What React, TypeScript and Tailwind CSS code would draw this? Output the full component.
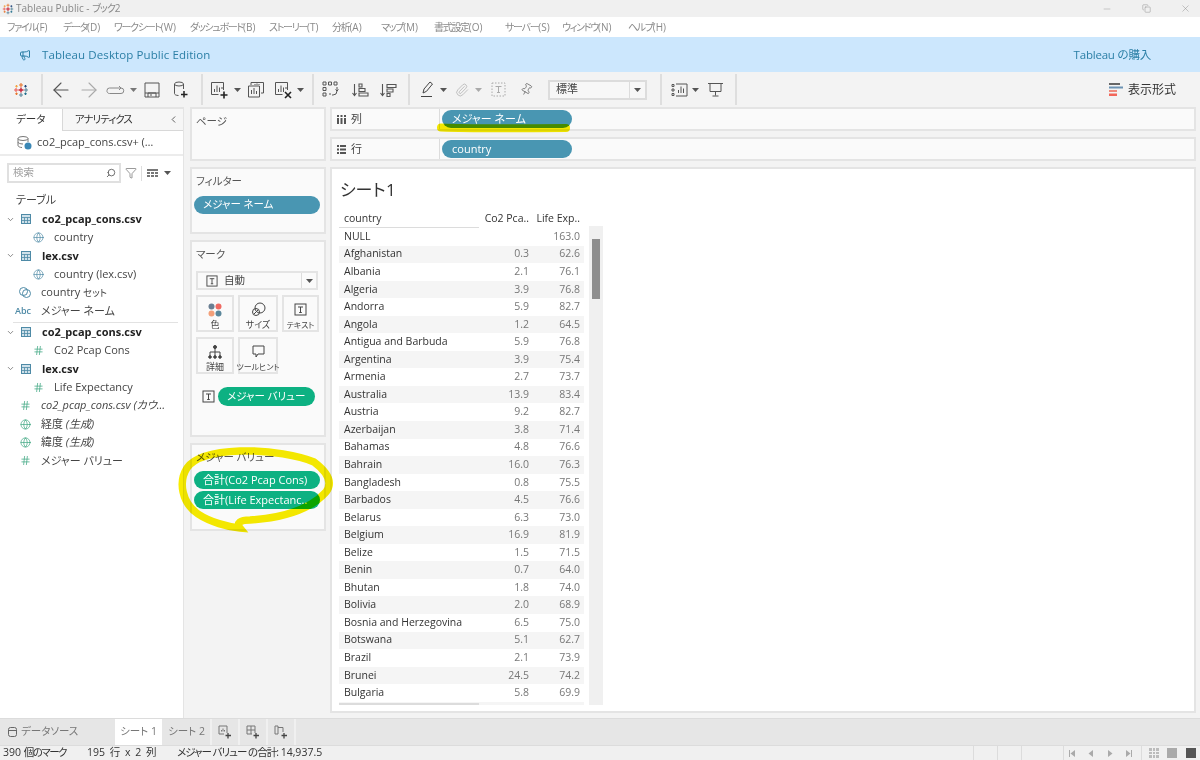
import React from "react";
import { ArrowLeft, ArrowRight, ChevronDown, ChevronLeft, Search, Filter, Minus, X, Pin, Paperclip, Megaphone, Copy, Globe, Hash } from "lucide-react";

const Caret = ({ c = "#555" }: { c?: string }) => (
  <svg width="7" height="4" viewBox="0 0 7 4" className="shrink-0"><path d="M0 0h7L3.5 4z" fill={c} /></svg>
);

const TLogo = ({ s = 16 }: { s?: number }) => (
  <svg width={s} height={s} viewBox="0 0 16 16" strokeWidth="1.1" fill="none">
    <path d="M8 1v4M6 3h4" stroke="#e8762d" />
    <path d="M8 11v4M6 13h4" stroke="#5b879b" />
    <path d="M1 8h4M3 6v4" stroke="#eb5c55" />
    <path d="M11 8h4M13 6v4" stroke="#59879b" />
    <path d="M8 5.5v5M5.5 8h5" stroke="#c72035" strokeWidth="1.4" />
    <path d="M3.5 3v2.6M2.2 4.3h2.6" stroke="#f3a33f" />
    <path d="M12.5 3v2.6M11.2 4.3h2.6" stroke="#1f447a" />
    <path d="M3.5 10.4V13M2.2 11.7h2.6" stroke="#e8762d" />
    <path d="M12.5 10.4V13M11.2 11.7h2.6" stroke="#1f6e8c" />
  </svg>
);

const Chart = ({ badge }: { badge?: "plus" | "x" }) => (
  <svg width="18" height="18" viewBox="0 0 18 18" fill="none" stroke="#555" strokeWidth="1">
    <path d="M13.5 9V1.5h-12v12h7" />
    <path d="M4.5 11V8M7 11V4.5M9.5 11V6.5M12 8V6" />
    {badge === "plus" && <path d="M14 10.5v7M10.5 14h7" stroke="#222" strokeWidth="1.6" />}
    {badge === "x" && <path d="M11 11l6 6M17 11l-6 6" stroke="#222" strokeWidth="1.6" />}
  </svg>
);

const Bars = ({ flip }: { flip?: boolean }) => (
  <svg width="17" height="16" viewBox="0 0 17 16" fill="none" stroke="#555" strokeWidth="1.1">
    <path d="M2.5 2v11M.5 11l2 2.5 2-2.5" />
    {flip ? <path d="M7 2.5h9v3H7zM7 7h6v3H7zM7 11.5h3v3H7z" /> : <path d="M7 2h3v3H7zM7 6.5h6v3H7zM7 11h9v3H7z" />}
  </svg>
);

const Shelf = ({ label, icon, pill }: { label: string; icon: React.ReactNode; pill: string }) => (
  <div className="h-[24px] flex items-center border-2 border-[#e4e4e4] bg-[#fafafa]">
    <div className="w-[108px] h-full flex items-center gap-[5px] pl-[5px] border-r border-[#dcdcdc] text-[11px] text-[#444]">
      {icon}
      <span>{label}</span>
    </div>
    <div className="ml-[2px] w-[130px] h-[18px] rounded-full bg-[#4996b2] text-white text-[11px] leading-[18px] pl-[10px]">{pill}</div>
  </div>
);

const Card = ({ title, className, children }: { title: string; className: string; children?: React.ReactNode }) => (
  <div className={"border-2 border-[#e4e4e4] bg-[#fafafa] " + className}>
    <div className="text-[10.5px] text-[#555] pl-[4px] pt-[4px] leading-[16px]">{title}</div>
    {children}
  </div>
);

const TableIcon = () => (
  <svg width="10" height="10" viewBox="0 0 10 10" className="shrink-0">
    <rect x="0.5" y="0.5" width="9" height="9" fill="#cfe1ea" stroke="#4e8aa6" />
    <path d="M0 3.5h10M3.5 3.5V10M6.5 3.5V10M0 6.5h10" stroke="#4e8aa6" strokeWidth="0.8" />
  </svg>
);

const Parent = ({ text }: { text: string }) => (
  <div className="h-[18.4px] flex items-center text-[11px] font-bold text-[#222]">
    <ChevronDown size={9} className="ml-[6px] text-[#666] shrink-0" />
    <span className="ml-[6px]"><TableIcon /></span>
    <span className="ml-[11px]">{text}</span>
  </div>
);

const GlobeI = ({ c = "#4e8aa6" }: { c?: string }) => <Globe size={11} color={c} strokeWidth={1.5} className="shrink-0" />;
const HashI = () => <Hash size={11} color="#3ba57f" strokeWidth={1.6} className="shrink-0" />;

const Child = ({ icon, text }: { icon: React.ReactNode; text: string }) => (
  <div className="h-[18.4px] flex items-center text-[11px] text-[#444] pl-[33px] gap-[10px] whitespace-nowrap">
    {icon}
    <span>{text}</span>
  </div>
);

const Top = ({ icon, text, italic }: { icon: React.ReactNode; text: React.ReactNode; italic?: boolean }) => (
  <div className="h-[18.4px] flex items-center text-[11px] text-[#444] whitespace-nowrap">
    <span className="w-[41px] flex justify-center pl-[9px] shrink-0">{icon}</span>
    <span className={italic ? "italic" : ""}>{text}</span>
  </div>
);

const MarkBtn = ({ icon, label, w = "w-[38px]", small }: { icon: React.ReactNode; label: string; w?: string; small?: boolean }) => (
  <div className={"h-[37px] border-2 border-[#e4e4e4] bg-[#fafafa] flex flex-col items-center pt-[3px] " + w}>
    <div className="h-[19px] flex items-center">{icon}</div>
    <div className={(small ? "text-[8px]" : "text-[9px]") + " text-[#444] leading-[11px] whitespace-nowrap"}>{label}</div>
  </div>
);

const TBox = ({ s = 13 }: { s?: number }) => (
  <svg width={s} height={s} viewBox="0 0 13 13" fill="none" stroke="#444" className="shrink-0">
    <rect x="1" y="1" width="11" height="11" />
    <path d="M4 4h5M6.5 4v5.5M5.2 9.5h2.6" />
  </svg>
);

const rows: [string, string, string][] = [
  ["NULL", "", "163.0"], ["Afghanistan", "0.3", "62.6"], ["Albania", "2.1", "76.1"], ["Algeria", "3.9", "76.8"],
  ["Andorra", "5.9", "82.7"], ["Angola", "1.2", "64.5"], ["Antigua and Barbuda", "5.9", "76.8"], ["Argentina", "3.9", "75.4"],
  ["Armenia", "2.7", "73.7"], ["Australia", "13.9", "83.4"], ["Austria", "9.2", "82.7"], ["Azerbaijan", "3.8", "71.4"],
  ["Bahamas", "4.8", "76.6"], ["Bahrain", "16.0", "76.3"], ["Bangladesh", "0.8", "75.5"], ["Barbados", "4.5", "76.6"],
  ["Belarus", "6.3", "73.0"], ["Belgium", "16.9", "81.9"], ["Belize", "1.5", "71.5"], ["Benin", "0.7", "64.0"],
  ["Bhutan", "1.8", "74.0"], ["Bolivia", "2.0", "68.9"], ["Bosnia and Herzegovina", "6.5", "75.0"], ["Botswana", "5.1", "62.7"],
  ["Brazil", "2.1", "73.9"], ["Brunei", "24.5", "74.2"], ["Bulgaria", "5.8", "69.9"], ["Burkina Faso", "0.2", "61.1"],
];

const menus = [
  ["ファイル", "(F)", 7], ["データ", "(D)", 63], ["ワークシート", "(W)", 114], ["ダッシュボード", "(B)", 190], ["ストーリー", "(T)", 269], ["分析", "(A)", 332],
  ["マップ", "(M)", 381], ["書式設定", "(O)", 434], ["サーバー", "(S)", 505], ["ウィンドウ", "(N)", 562], ["ヘルプ", "(H)", 628],
] as [string, string, number][];

const Sep = ({ ml }: { ml: number }) => <div className="w-[2px] h-[31px] bg-[#dedede] shrink-0" style={{ marginLeft: ml }} />;

export default function App() {
  return (
    <div className="w-[1200px] h-[760px] relative overflow-hidden flex flex-col bg-[#f3f3f3] [font-family:'Open_Sans','Noto_Sans_CJK_JP',sans-serif] [font-feature-settings:'palt']">
      {/* title bar */}
      <div className="h-[17px] bg-[#f0f0f0] flex items-center pl-[2px] text-[10px] text-[#888] gap-[2px] shrink-0">
        <TLogo s={12} />
        <span>Tableau Public - <span className="tracking-[-1px]">ブック2</span></span>
        <div className="ml-auto flex items-center text-[#888]">
          <Minus size={10} strokeWidth={1} />
          <Copy size={9} strokeWidth={1.2} className="ml-[30px]" />
          <X size={11} strokeWidth={1} className="ml-[29px] mr-[9px]" />
        </div>
      </div>
      {/* menu */}
      <div className="h-[20px] bg-white flex items-center text-[10px] text-[#8a8a8a] shrink-0">
        {menus.map(([m, k, x], i) => {
          const next = i + 1 < menus.length ? menus[i + 1][2] : x + 60;
          return (
            <span key={m} style={{ width: next - x, marginLeft: i === 0 ? x : 0 }} className="whitespace-nowrap">
              <span className="tracking-[-1.3px]">{m}</span>
              <span>{k}</span>
            </span>
          );
        })}
      </div>
      {/* banner */}
      <div className="h-[35px] bg-[#cce7fd] flex items-center text-[11.5px] text-[#2b7fa6] shrink-0 tracking-[0.1px]">
        <Megaphone size={12} className="ml-[19px] mr-[11px]" strokeWidth={2} />
        <span>Tableau Desktop Public Edition</span>
        <span className="ml-auto mr-[49px] tracking-[-0.2px]">Tableau の購入</span>
      </div>
      {/* toolbar */}
      <div className="h-[35px] flex items-center shrink-0 text-[#555]">
        <div className="ml-[13px]"><TLogo /></div>
        <Sep ml={12} />
        <ArrowLeft size={24} strokeWidth={1.1} className="ml-[6px]" />
        <ArrowRight size={24} strokeWidth={1.1} className="ml-[4px] text-[#aaa]" />
        <svg width="19" height="10" viewBox="0 0 19 10" fill="none" stroke="#888" className="ml-[5px]"><path d="M1 5.5a2.5 2.5 0 0 1 2.5-2.5h11.5a2.5 2.5 0 0 1 0 5.5H3.5A2.5 2.5 0 0 1 1 5.5zM13 1l2 2-2 2" /></svg>
        <span className="ml-[5px]"><Caret c="#777" /></span>
        <svg width="16" height="16" viewBox="0 0 16 16" fill="none" stroke="#555" className="ml-[7px]"><path d="M1 1h14v14H1zM4 15v-4h8v4M1 11h14M6 13h2" /></svg>
        <svg width="15" height="17" viewBox="0 0 15 17" fill="none" stroke="#555" className="ml-[13px]"><ellipse cx="6" cy="3" rx="4.5" ry="2" /><path d="M1.5 3v9.5c0 1 1.5 2 4 2M10.500 3v5" /><path d="M11 10v6.500M8 13.500h6.500" stroke="#222" strokeWidth="1.5" /></svg>
        <Sep ml={13} />
        <span className="ml-[7px] flex"><Chart badge="plus" /></span>
        <span className="ml-[6px]"><Caret /></span>
        <span className="ml-[6px] flex"><svg width="18" height="18" viewBox="0 0 18 18" fill="none" stroke="#555"><path d="M4 4V1.500h12.500V12H14M1.500 5h11v11h-11zM4.500 13V9M7 13V7M9.500 13v-3M8 4V3M10 4V2.500M12 4V3" /></svg></span>
        <span className="ml-[9px] flex"><Chart badge="x" /></span>
        <span className="ml-[5px]"><Caret /></span>
        <Sep ml={8} />
        <svg width="17" height="17" viewBox="0 0 17 17" fill="none" stroke="#555" className="ml-[8px]"><path d="M1 1h3v3H1zM6.500 1h3v3h-3zM12 1h3v3h-3zM1 6.500h3v3H1zM1 12h3v3H1zM7 13h2M15 6v4a4 4 0 0 1-4 4h-1M13.500 8.500l1.500 1.500 1.500-1.500" /></svg>
        <span className="ml-[13px] flex"><Bars /></span>
        <span className="ml-[11px] flex"><Bars flip /></span>
        <Sep ml={11} />
        <svg width="13" height="17" viewBox="0 0 13 17" fill="none" stroke="#444" className="ml-[11px]"><path d="M2 12l1-4 6-7 2.500 2-6 7.300zM0 15.500h11" /></svg>
        <span className="ml-[6px]"><Caret /></span>
        <Paperclip size={14} strokeWidth={1.2} className="ml-[8px] text-[#aaa]" />
        <span className="ml-[6px]"><Caret c="#aaa" /></span>
        <div className="ml-[9px]"><svg width="15" height="15" viewBox="0 0 15 15" fill="none" stroke="#aaa"><rect x="1" y="1" width="13" height="13" strokeDasharray="1.500 1.500" /><path d="M4.500 4.500h6M7.500 4.500v6M6 10.500h3" /></svg></div>
        <Pin size={13} strokeWidth={1.2} className="ml-[14px] rotate-[30deg]" />
        <div className="ml-[15px] w-[99px] h-[20px] border-2 border-[#dcdcdc] bg-[#f7f7f7] flex items-center text-[11px] text-[#444] pl-[6px]">
          <span>標準</span>
          <div className="ml-auto w-[16px] h-full border-l border-[#dcdcdc] flex items-center justify-center"><Caret /></div>
        </div>
        <Sep ml={13} />
        <svg width="17" height="14" viewBox="0 0 17 14" fill="none" stroke="#555" className="ml-[9px]"><path d="M5 1h11v12H5M7.500 10V7M10 10V3.500M12.500 10V5.500M1 1.500h2v2H1zM1 6h2v2H1zM1 10.500h2v2H1z" /></svg>
        <span className="ml-[4px]"><Caret /></span>
        <svg width="15" height="15" viewBox="0 0 15 15" fill="none" stroke="#555" className="ml-[9px]"><path d="M0 1.500h15M2 1.500v8h11v-8M7.500 9.500v4M4.500 14h6" /></svg>
        <Sep ml={12} />
        <div className="ml-auto mr-[24px] flex items-center gap-[5px] text-[12px] text-[#333]">
          <svg width="14" height="14" viewBox="0 0 14 14"><rect width="11" height="2" fill="#666" /><rect y="3.500" width="14" height="2" fill="#6c93b4" /><rect y="7" width="8" height="2" fill="#ef8a7c" /><rect y="10.500" width="8" height="2.500" fill="#f2665a" /></svg>
          <span>表示形式</span>
        </div>
      </div>

      {/* main */}
      <div className="h-[611px] flex shrink-0">
        {/* data pane */}
        <div className="w-[184px] shrink-0 bg-white border-r border-[#e4e4e4] overflow-hidden">
          <div className="h-[24px] flex text-[10.5px] text-[#333] border-t-2 border-[#e4e4e4]">
            <div className="w-[63px] border-r border-[#d8d8d8] pl-[16px] leading-[20px]">データ</div>
            <div className="flex-1 bg-[#f6f6f6] border-b border-[#d8d8d8] pl-[12px] flex items-center">
              <span className="tracking-[-1px]">アナリティクス</span>
              <ChevronLeft size={11} className="ml-auto mr-[4px] text-[#555]" />
            </div>
          </div>
          <div className="h-[25px] flex items-center border-b-2 border-[#ececec] text-[11px] text-[#444] pl-[17px] gap-[5px] whitespace-nowrap">
            <svg width="15" height="15" viewBox="0 0 15 15" fill="none" stroke="#777"><ellipse cx="6" cy="3.500" rx="5" ry="2" /><path d="M1 3.500v7c0 1 2 2 4 2M11 3.500V7M1 7c0 1 2 2 5 2" /><circle cx="11" cy="11" r="3.500" fill="#3a87b5" stroke="none" /></svg>
            <span>co2_pcap_cons.csv+ (…</span>
          </div>
          <div className="mt-[6px] flex items-center h-[22px] pl-[7px]">
            <div className="w-[114px] h-[20px] border-2 border-[#e0e0e0] flex items-center pl-[4px] text-[10.5px] text-[#a0a0a0]">
              <span>検索</span>
              <Search size={10} className="ml-auto mr-[3px] text-[#555] -scale-x-100" />
            </div>
            <Filter size={12} strokeWidth={1.2} className="ml-[4px] text-[#555]" />
            <div className="w-px h-[15px] bg-[#ddd] ml-[4px]" />
            <svg width="11" height="9" viewBox="0 0 11 9" className="ml-[5px]" fill="#777"><path d="M0 0h11v2H0zM0 3h3v2H0zM4 3h3v2H4zM8 3h3v2H8zM0 6h3v2H0zM4 6h3v2H4zM8 6h3v2H8z" /></svg>
            <span className="ml-[6px]"><Caret /></span>
          </div>
          <div className="mt-[7px] h-[18.4px] flex items-center pl-[16px] text-[11px] text-[#444]">テーブル</div>
          <div className="h-[0.6px]" />
          <Parent text="co2_pcap_cons.csv" />
          <Child icon={<GlobeI />} text="country" />
          <Parent text="lex.csv" />
          <Child icon={<GlobeI />} text="country (lex.csv)" />
          <Top icon={<svg width="12" height="11" viewBox="0 0 12 11" fill="none" stroke="#4e8aa6"><circle cx="4.500" cy="4.500" r="4" /><circle cx="7.500" cy="6.500" r="4" /></svg>} text={<>country <span className="text-[9.5px]">セット</span></>} />
          <Top icon={<span className="text-[9px] font-semibold text-[#4e8aa6] -ml-[4px]">Abc</span>} text="メジャー ネーム" />
          <div className="ml-[13px] h-[2.600px] border-b border-[#e2e2e2] w-[165px]" />
          <Parent text="co2_pcap_cons.csv" />
          <Child icon={<HashI />} text="Co2 Pcap Cons" />
          <Parent text="lex.csv" />
          <Child icon={<HashI />} text="Life Expectancy" />
          <Top icon={<HashI />} italic text="co2_pcap_cons.csv (カウ…" />
          <Top icon={<GlobeI c="#3ba57f" />} text={<>経度 <i>(生成)</i></>} />
          <Top icon={<GlobeI c="#3ba57f" />} text={<>緯度 <i>(生成)</i></>} />
          <Top icon={<HashI />} text="メジャー バリュー" />
        </div>

        {/* shelves column */}
        <div className="w-[136px] ml-[6px] shrink-0 flex flex-col gap-[6px] mr-[4px]">
          <Card title="ページ" className="h-[54px]" />
          <Card title="フィルター" className="h-[67px]">
            <div className="mt-[7px] mx-[2px] w-[126px] h-[18px] rounded-full bg-[#4996b2] text-white text-[10.5px] leading-[17px] pl-[9px]">メジャー ネーム</div>
          </Card>
          <Card title="マーク" className="h-[197px]">
            <div className="mt-[9px] mx-[4px] h-[19px] w-[122px] border-2 border-[#e4e4e4] flex items-center text-[10.5px] text-[#444] pl-[8px] gap-[6px]">
              <TBox s={12} />
              <span>自動</span>
              <div className="ml-auto w-[15px] h-full border-l border-[#dcdcdc] flex items-center justify-center"><Caret /></div>
            </div>
            <div className="mt-[5px] ml-[4px] flex gap-[4px]">
              <MarkBtn label="色" icon={<svg width="14" height="14" viewBox="0 0 14 14"><circle cx="3.500" cy="3.500" r="3" fill="#6a7f93" /><circle cx="10.500" cy="3.500" r="3" fill="#ef6a62" /><circle cx="3.500" cy="10.500" r="3" fill="#f3a07a" /><circle cx="10.500" cy="10.500" r="3" fill="#5b879b" /></svg>} />
              <MarkBtn label="サイズ" w="w-[40px]" icon={<svg width="15" height="15" viewBox="0 0 15 15" fill="none" stroke="#444"><circle cx="9" cy="6" r="5" /><circle cx="5" cy="10" r="3.500" /><path d="M3 12l4-4" /></svg>} />
              <MarkBtn label="テキスト" w="w-[37px]" small icon={<TBox />} />
            </div>
            <div className="mt-[5px] ml-[4px] flex gap-[4px]">
              <MarkBtn label="詳細" icon={<svg width="14" height="14" viewBox="0 0 14 14" fill="none" stroke="#444"><path d="M7 3v4M2 12V7h10v5M7 7v5" /><circle cx="7" cy="2" r="1.500" fill="#444" /><circle cx="2" cy="12" r="1.300" fill="#444" /><circle cx="7" cy="12" r="1.300" fill="#444" /><circle cx="12" cy="12" r="1.300" fill="#444" /></svg>} />
              <MarkBtn label="ツールヒント" w="w-[40px]" small icon={<svg width="13" height="13" viewBox="0 0 13 13" fill="none" stroke="#444"><path d="M1 1h11v8H6l-2 3V9H1z" /></svg>} />
            </div>
            <div className="mt-[13px] ml-[10px] flex items-center gap-[3px]">
              <TBox s={13} />
              <div className="w-[97px] h-[19px] rounded-full bg-[#0db182] text-white text-[10.5px] leading-[18px] pl-[9px] whitespace-nowrap">メジャー バリュー</div>
            </div>
          </Card>
          <Card title="メジャー バリュー" className="h-[88px]">
            <div className="mt-[6px] mx-[2px] flex flex-col gap-[2px] text-white text-[11px] leading-[18px]">
              <div className="w-[126px] h-[18px] rounded-full bg-[#0db182] pl-[9px] whitespace-nowrap">合計(Co2 Pcap Cons)</div>
              <div className="w-[126px] h-[18px] rounded-full bg-[#0db182] pl-[9px] whitespace-nowrap">合計(Life Expectanc..</div>
            </div>
          </Card>
        </div>

        {/* right */}
        <div className="w-[866px] shrink-0 flex flex-col gap-[6px]">
          <Shelf label="列" pill="メジャー ネーム" icon={<svg width="9" height="9" viewBox="0 0 9 9" fill="#555"><path d="M0 0h2v2H0zM3.500 0h2v2h-2zM7 0h2v2H7zM0 3h2v6H0zM3.500 3h2v6h-2zM7 3h2v6H7z" /></svg>} />
          <Shelf label="行" pill="country" icon={<svg width="9" height="9" viewBox="0 0 9 9" fill="#555"><path d="M0 0h2v2H0zM0 3.500h2v2H0zM0 7h2v2H0zM3 0h6v2H3zM3 3.500h6v2H3zM3 7h6v2H3z" /></svg>} />
          <div className="h-[546px] border-2 border-[#e4e4e4] bg-white pl-[7px] overflow-hidden">
            <div className="h-[41px] text-[17px] text-[#333] pt-[9px] pl-[1px] leading-[24px] [word-spacing:-4px]">シート 1</div>
            <div className="flex h-[495px] overflow-hidden">
              <div className="w-[245px] shrink-0 relative overflow-hidden">
                <div className="h-[18px] flex text-[10.5px] text-[#333] leading-[17px]">
                  <div className="w-[140px] pl-[5px] border-b border-[#dcdcdc]">country</div>
                  <div className="w-[50px] text-right whitespace-nowrap">Co2 Pca..</div>
                  <div className="w-[51px] text-right whitespace-nowrap">Life Exp..</div>
                </div>
                {rows.map((r, i) => (
                  <div key={r[0]} className={"h-[17.56px] flex items-center text-[10.5px] " + (i % 2 ? "bg-[#f5f5f5]" : "")}>
                    <div className="w-[140px] pl-[5px] text-[#333] whitespace-nowrap">{r[0]}</div>
                    <div className="w-[50px] text-right text-[#777]">{r[1]}</div>
                    <div className="w-[51px] text-right text-[#777]">{r[2]}</div>
                  </div>
                ))}
                <div className="absolute left-0 top-[493px] w-[140px] h-[2px] bg-[#dcdcdc]" />
              </div>
              <div className="ml-[5px] mt-[16px] w-[14px] h-[479px] bg-[#f0f0f0] flex justify-center">
                <div className="mt-[13px] w-[8px] h-[60px] bg-[#8e8e8e]" />
              </div>
            </div>
          </div>
        </div>
      </div>

      {/* tabs */}
      <div className="h-[27px] bg-[#e6e6e6] border-t border-[#dcdcdc] flex text-[10.5px] text-[#777] shrink-0">
        <div className="w-[115px] flex items-center pl-[8px] gap-[4px]">
          <svg width="9" height="10" viewBox="0 0 9 10" fill="none" stroke="#666"><rect x="0.500" y="0.500" width="8" height="9" rx="2" /><path d="M0.500 3.500h8" /></svg>
          <span>データソース</span>
        </div>
        <div className="w-[47px] bg-white flex items-center justify-center">シート 1</div>
        <div className="w-[47px] ml-px bg-[#e6e6e6] flex items-center justify-center">シート 2</div>
        {[0, 1, 2].map((k) => (
          <div key={k} className="w-[28px] border-l-2 border-[#f0f0f0] flex items-center justify-center">
            <svg width="14" height="14" viewBox="0 0 14 14" fill="none" stroke="#777">
              {k === 0 && <path d="M9 8V1H1v8h5M3.500 6.500V5M5 6.500V3.500M6.500 6.500V5" />}
              {k === 1 && <path d="M9 8V1H1v8h5M1 5h8M5 1v8" />}
              {k === 2 && <path d="M4 1H1v8h3V1zM4 2.500h5V7" />}
              <path d="M10 8v5.500M7.500 10.500h5.500" stroke="#444" strokeWidth="1.300" />
            </svg>
          </div>
        ))}
        <div className="border-l-2 border-[#f0f0f0]" />
      </div>
      {/* status */}
      <div className="h-[15px] bg-[#f0f0f0] border-t border-[#dcdcdc] flex items-center text-[10.5px] text-[#333] shrink-0 whitespace-nowrap">
        <span className="ml-[3px] w-[84px]">390 <span className="tracking-[-1.5px]">個のマーク</span></span>
        <span className="w-[90px] [word-spacing:2px]">195 行 x 2 列</span>
        <span><span className="tracking-[-1px]">メジャー バリュー の合計:</span> 14,937.5</span>
        <div className="ml-auto w-px h-full bg-[#dcdcdc] mr-[23px]" />
        <div className="w-px h-full bg-[#dcdcdc] mr-[23px]" />
        <div className="w-px h-full bg-[#dcdcdc] mr-[41px]" />
        <div className="w-px h-full bg-[#dcdcdc] mr-[5px]" />
        <div className="flex items-center gap-[7px] text-[#aaa]">
          <svg width="6" height="7" viewBox="0 0 6 7" fill="#aaa"><path d="M0 0h1v7H0zM6 0v7L1.500 3.500z" /></svg>
          <svg width="6" height="7" viewBox="0 0 6 7" className="ml-[6px]" fill="#aaa"><path d="M5 0v7L.5 3.500z" /></svg>
          <svg width="6" height="7" viewBox="0 0 6 7" className="ml-[6px]" fill="#aaa"><path d="M1 0v7l4.500-3.500z" /></svg>
          <svg width="6" height="7" viewBox="0 0 6 7" className="ml-[6px]" fill="#aaa"><path d="M5 0h1v7H5zM0 0v7l4.500-3.500z" /></svg>
        </div>
        <div className="w-px h-full bg-[#dcdcdc] ml-[9px] mr-[7px]" />
        <div className="grid grid-cols-3 gap-px w-[10px] h-[10px] mr-[8px]">
          {[...Array(9)].map((_, i) => <div key={i} className="bg-[#bbb]" />)}
        </div>
        <div className="w-[10px] h-[10px] bg-[#aaa] mr-[9px]" />
        <div className="w-[10px] h-[10px] bg-[#555] mr-[4px]" />
      </div>

      {/* hand-drawn highlighter marks */}
      <svg className="absolute left-0 top-0 pointer-events-none mix-blend-multiply" width="1200" height="760" viewBox="0 0 1200 760" fill="none" stroke="#f8ec00" strokeLinecap="round">
        <path d="M441 127.500C480 129 530 128 566 128" strokeWidth="8" />
        <path d="M314 462C300 456 270 450 240 451C215 452 195 456 187 468C178 482 182 503 198 514C210 522 228 527 240 528C236 523 240 520 250 520C280 518 310 510 326 492C332 484 330 474 314 462Z" strokeWidth="7.500" />
      </svg>
    </div>
  );
}
